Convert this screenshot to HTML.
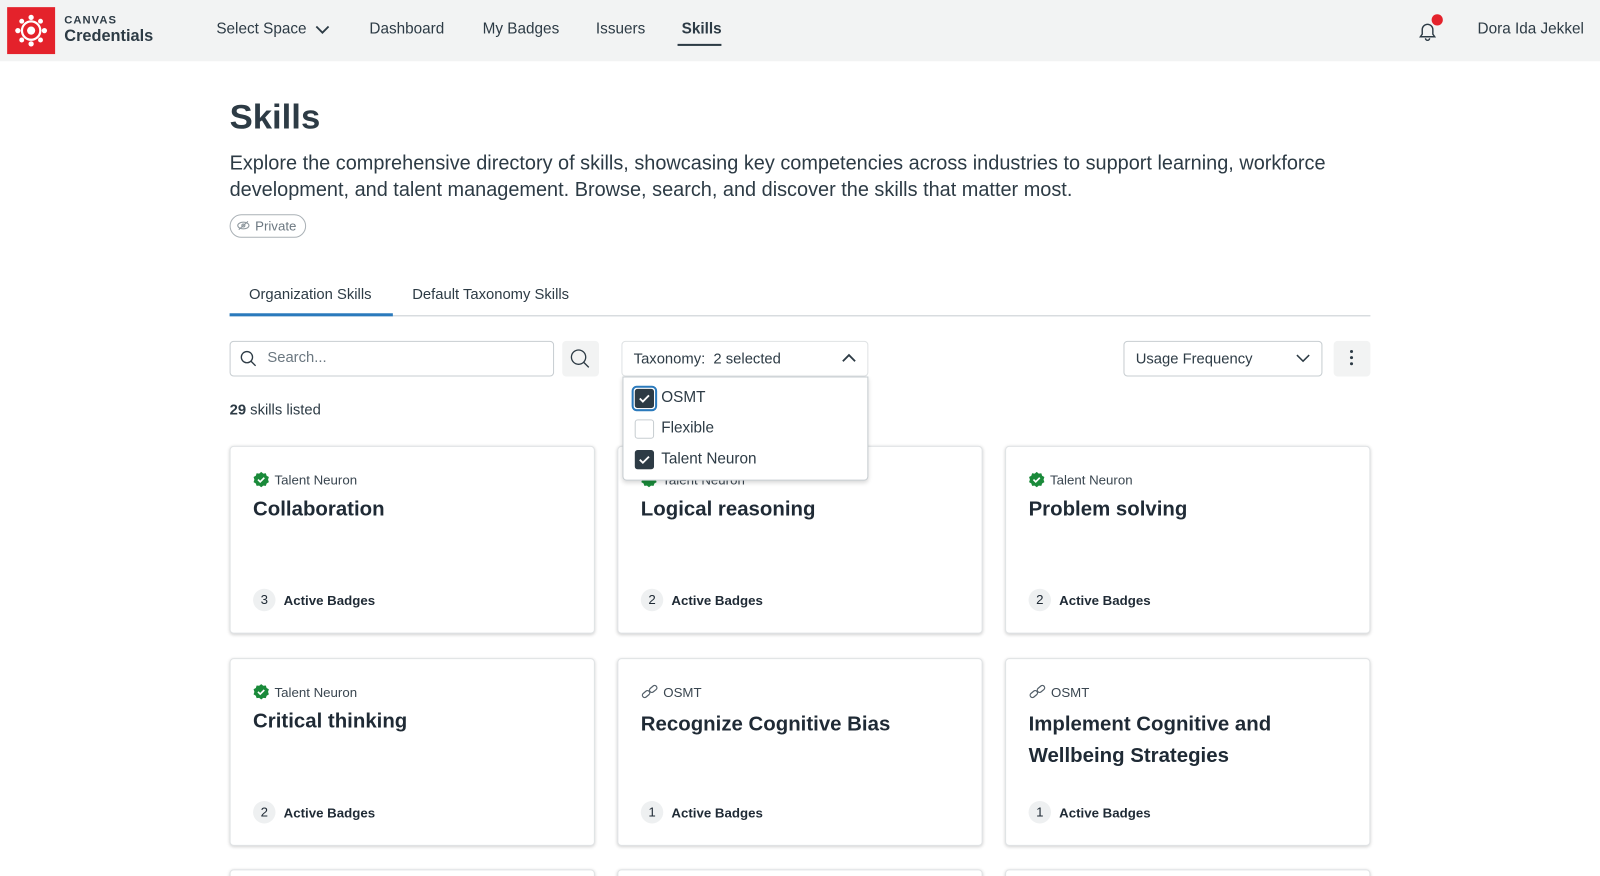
<!DOCTYPE html>
<html style="width:1600px;height:876px;overflow:hidden"><head><meta charset="utf-8"><style>
*{box-sizing:border-box;margin:0;padding:0}
body{width:1600px;height:876px;overflow:hidden;background:#fff;font-family:"Liberation Sans",sans-serif;color:#2d3b45;position:relative}
#w{position:absolute;left:0;top:0;width:1568px;height:859px;transform:scale(1.0204);transform-origin:0 0;overflow:hidden}
.a{position:absolute}
.hdr{left:0;top:0;width:1568px;height:60px;background:#f2f3f3}
.nav{top:20px;font-size:15px;color:#2d3b45}
.card{position:absolute;width:358px;height:184px;border:1px solid #e0e3e5;border-radius:4px;box-shadow:0 1px 3px rgba(0,0,0,.18);background:#fff}
.card .src{position:absolute;left:22px;top:24px;font-size:13px;color:#3a4650;display:flex;align-items:center;gap:5px}
.card .t{position:absolute;left:22px;top:46px;font-size:20px;font-weight:bold;color:#1f2a35;line-height:31px;width:320px}
.card .b{position:absolute;left:22px;top:139px;font-size:13px;font-weight:bold;color:#1f2a35;display:flex;align-items:center;gap:8px}
.card .b span{display:inline-block;width:22px;height:22px;border-radius:11px;background:#eef0f1;text-align:center;line-height:22px;font-weight:normal}
</style></head><body><div id="w">
<div class="a hdr"></div>
<div class="a" style="left:7px;top:7px;width:47px;height:46px;background:#e4222b">
<svg width="47" height="46" viewBox="0 0 47 46"><g fill="#fff"><circle cx="23.5" cy="23" r="4"/><circle cx="23.5" cy="10" r="2.6"/><circle cx="23.5" cy="36" r="2.6"/><circle cx="10.5" cy="23" r="2.6"/><circle cx="36.5" cy="23" r="2.6"/><circle cx="14.3" cy="13.8" r="2.4"/><circle cx="32.7" cy="13.8" r="2.4"/><circle cx="14.3" cy="32.2" r="2.4"/><circle cx="32.7" cy="32.2" r="2.4"/></g><circle cx="23.5" cy="23" r="9" fill="none" stroke="#fff" stroke-width="2.2"/></svg></div>
<div class="a" style="left:63px;top:14px;font-size:11px;font-weight:bold;letter-spacing:1px;color:#2d3b45">CANVAS</div>
<div class="a" style="left:63px;top:27px;font-size:16px;font-weight:bold;color:#2d3b45">Credentials</div>
<div class="a nav" style="left:212px">Select Space</div>
<svg class="a" style="left:309px;top:24px" width="14" height="10"><path d="M1 2l6 6 6-6" stroke="#2d3b45" stroke-width="1.8" fill="none"/></svg>
<div class="a nav" style="left:362px">Dashboard</div>
<div class="a nav" style="left:473px">My Badges</div>
<div class="a nav" style="left:584px">Issuers</div>
<div class="a nav" style="left:668px;font-weight:bold">Skills</div>
<div class="a" style="left:664px;top:43px;width:43px;height:2px;background:#2d3b45"></div>
<svg class="a" style="left:1387px;top:18px" width="24" height="24" viewBox="0 0 24 24"><path d="M5 18h14l-1.8-2.5V11a5.2 5.2 0 0 0-10.4 0v4.5z M10 19.5a2 2 0 0 0 4 0" stroke="#2d3b45" stroke-width="1.4" fill="none"/></svg>
<div class="a" style="left:1403px;top:14px;width:11px;height:11px;border-radius:6px;background:#e4222b"></div>
<div class="a nav" style="left:1448px">Dora Ida Jekkel</div>

<div class="a" style="left:225px;top:96px;font-size:34px;font-weight:bold;color:#2d3b45">Skills</div>
<div class="a" style="left:225px;top:147px;width:1140px;font-size:19.5px;line-height:26px;color:#2d3b45">Explore the comprehensive directory of skills, showcasing key competencies across industries to support learning, workforce development, and talent management. Browse, search, and discover the skills that matter most.</div>
<div class="a" style="left:225px;top:210px;width:75px;height:23px;border:1px solid #aab1b6;border-radius:12px;font-size:13px;color:#6b7780;padding:3px 0 0 24px">Private</div>
<svg class="a" style="left:232px;top:215px" width="13" height="12" viewBox="0 0 13 12"><ellipse cx="6.5" cy="6" rx="5.5" ry="3.3" fill="none" stroke="#8a949b"/><circle cx="6.5" cy="6" r="1.5" fill="none" stroke="#8a949b"/><path d="M2 10L11 2" stroke="#8a949b"/></svg>

<div class="a" style="left:225px;top:309px;width:1118px;height:1px;background:#c7cdd1"></div>
<div class="a" style="left:225px;top:307px;width:160px;height:3px;background:#2b7abc"></div>
<div class="a" style="left:244px;top:281px;font-size:14.5px">Organization Skills</div>
<div class="a" style="left:404px;top:281px;font-size:14.5px">Default Taxonomy Skills</div>

<div class="a" style="left:225px;top:334px;width:318px;height:35px;border:1px solid #c7cdd1;border-radius:4px"></div>
<svg class="a" style="left:235px;top:343px" width="17" height="17"><circle cx="7" cy="7" r="5.5" stroke="#2d3b45" stroke-width="1.3" fill="none"/><path d="M11 11l4.5 4.5" stroke="#2d3b45" stroke-width="1.3"/></svg>
<div class="a" style="left:262px;top:343px;font-size:14.5px;color:#6b7780">Search...</div>
<div class="a" style="left:551px;top:334px;width:36px;height:35px;background:#f2f3f3;border-radius:4px"></div>
<svg class="a" style="left:558px;top:341px" width="21" height="21"><circle cx="9" cy="9" r="7" stroke="#2d3b45" stroke-width="1.3" fill="none"/><path d="M14 14l5 5" stroke="#2d3b45" stroke-width="1.3"/></svg>

<div class="a" style="left:609px;top:334px;width:242px;height:35px;border:1px solid #dfe2e4;border-radius:4px;font-size:14.5px;padding:9px 0 0 11px">Taxonomy:&nbsp; 2 selected</div>
<svg class="a" style="left:825px;top:346px" width="14" height="10"><path d="M1 8l6-6 6 6" stroke="#2d3b45" stroke-width="1.8" fill="none"/></svg>

<div class="a" style="left:1101px;top:334px;width:195px;height:35px;border:1px solid #c7cdd1;border-radius:4px;font-size:14.5px;padding:9px 0 0 11px">Usage Frequency</div>
<svg class="a" style="left:1270px;top:346px" width="14" height="10"><path d="M1 2l6 6 6-6" stroke="#2d3b45" stroke-width="1.5" fill="none"/></svg>
<div class="a" style="left:1307px;top:334px;width:36px;height:35px;background:#f2f3f3;border-radius:4px"></div>
<div class="a" style="left:1323px;top:343px;width:3px;height:3px;border-radius:2px;background:#2d3b45;box-shadow:0 6px 0 #2d3b45,0 12px 0 #2d3b45"></div>

<div class="a" style="left:225px;top:394px;font-size:14.5px"><b>29</b> skills listed</div>

<div class="card" style="left:225px;top:437px"><div class="src"><svg width="16" height="16" viewBox="0 0 16 16"><path d="M8 0.5l2 1.6 2.5-.3.8 2.4 2.2 1.3-.8 2.5.8 2.5-2.2 1.3-.8 2.4-2.5-.3-2 1.6-2-1.6-2.5.3-.8-2.4L.5 10.5 1.3 8 .5 5.5l2.2-1.3.8-2.4 2.5.3z" fill="#1a8a3a"/><path d="M4.8 8l2.2 2.2 4-4" stroke="#fff" stroke-width="1.6" fill="none"/></svg>Talent Neuron</div><div class="t">Collaboration</div><div class="b"><span>3</span>Active Badges</div></div>
<div class="card" style="left:605px;top:437px"><div class="src"><svg width="16" height="16" viewBox="0 0 16 16"><path d="M8 0.5l2 1.6 2.5-.3.8 2.4 2.2 1.3-.8 2.5.8 2.5-2.2 1.3-.8 2.4-2.5-.3-2 1.6-2-1.6-2.5.3-.8-2.4L.5 10.5 1.3 8 .5 5.5l2.2-1.3.8-2.4 2.5.3z" fill="#1a8a3a"/></svg>Talent Neuron</div><div class="t">Logical reasoning</div><div class="b"><span>2</span>Active Badges</div></div>
<div class="card" style="left:985px;top:437px"><div class="src"><svg width="16" height="16" viewBox="0 0 16 16"><path d="M8 0.5l2 1.6 2.5-.3.8 2.4 2.2 1.3-.8 2.5.8 2.5-2.2 1.3-.8 2.4-2.5-.3-2 1.6-2-1.6-2.5.3-.8-2.4L.5 10.5 1.3 8 .5 5.5l2.2-1.3.8-2.4 2.5.3z" fill="#1a8a3a"/><path d="M4.8 8l2.2 2.2 4-4" stroke="#fff" stroke-width="1.6" fill="none"/></svg>Talent Neuron</div><div class="t">Problem solving</div><div class="b"><span>2</span>Active Badges</div></div>

<div class="card" style="left:225px;top:645px"><div class="src"><svg width="16" height="16" viewBox="0 0 16 16"><path d="M8 0.5l2 1.6 2.5-.3.8 2.4 2.2 1.3-.8 2.5.8 2.5-2.2 1.3-.8 2.4-2.5-.3-2 1.6-2-1.6-2.5.3-.8-2.4L.5 10.5 1.3 8 .5 5.5l2.2-1.3.8-2.4 2.5.3z" fill="#1a8a3a"/><path d="M4.8 8l2.2 2.2 4-4" stroke="#fff" stroke-width="1.6" fill="none"/></svg>Talent Neuron</div><div class="t">Critical thinking</div><div class="b"><span>2</span>Active Badges</div></div>
<div class="card" style="left:605px;top:645px"><div class="src"><svg width="17" height="16" viewBox="0 0 17 16"><rect x="1" y="8" width="8" height="4.5" rx="2.2" transform="rotate(-40 5 10)" fill="none" stroke="#55616b" stroke-width="1.2"/><rect x="8" y="3" width="8" height="4.5" rx="2.2" transform="rotate(-40 12 5)" fill="none" stroke="#55616b" stroke-width="1.2"/></svg>OSMT</div><div class="t" style="top:49px">Recognize Cognitive Bias</div><div class="b"><span>1</span>Active Badges</div></div>
<div class="card" style="left:985px;top:645px"><div class="src"><svg width="17" height="16" viewBox="0 0 17 16"><rect x="1" y="8" width="8" height="4.5" rx="2.2" transform="rotate(-40 5 10)" fill="none" stroke="#55616b" stroke-width="1.2"/><rect x="8" y="3" width="8" height="4.5" rx="2.2" transform="rotate(-40 12 5)" fill="none" stroke="#55616b" stroke-width="1.2"/></svg>OSMT</div><div class="t" style="top:49px">Implement Cognitive and Wellbeing Strategies</div><div class="b"><span>1</span>Active Badges</div></div>

<div class="card" style="left:225px;top:852px;height:30px"></div>
<div class="card" style="left:605px;top:852px;height:30px"></div>
<div class="card" style="left:985px;top:852px;height:30px"></div>

<div class="a" style="left:610px;top:369px;width:241px;height:102px;background:#fff;border:1px solid #c7cdd1;border-radius:0 0 4px 4px;box-shadow:0 2px 4px rgba(0,0,0,.15)"></div>
<div class="a" style="left:619px;top:378px;width:25px;height:25px;border:2px solid #2b7abc;border-radius:5px"></div>
<svg class="a" style="left:622px;top:381px" width="19" height="19"><rect width="19" height="19" rx="3" fill="#2d3b45"/><path d="M5 9.5l3 3 6-6" stroke="#fff" stroke-width="1.8" fill="none"/></svg>
<div class="a" style="left:648px;top:381px;font-size:15px">OSMT</div>
<div class="a" style="left:622px;top:411px;width:19px;height:19px;border:1px solid #c7cdd1;border-radius:3px"></div>
<div class="a" style="left:648px;top:411px;font-size:15px">Flexible</div>
<svg class="a" style="left:622px;top:441px" width="19" height="19"><rect width="19" height="19" rx="3" fill="#2d3b45"/><path d="M5 9.5l3 3 6-6" stroke="#fff" stroke-width="1.8" fill="none"/></svg>
<div class="a" style="left:648px;top:441px;font-size:15px">Talent Neuron</div>
</div></body></html>
